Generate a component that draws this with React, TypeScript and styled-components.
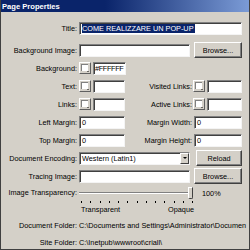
import styled, { createGlobalStyle } from 'styled-components';

const GlobalStyle = createGlobalStyle`
  html, body { margin: 0; padding: 0; background: #d4d0c8; }
`;

const Dialog = styled.div`
  width: 250px;
  height: 250px;
  box-sizing: border-box;
  border: 1px solid #404040;
  border-top: none;
  background: #d4d0c8;
  display: flex;
  flex-direction: column;
  overflow: hidden;
  font-family: "Liberation Sans", Arial, sans-serif;
  font-size: 7.3px;
  color: #000;
`;

const TitleBar = styled.div`
  height: 12px;
  flex: none;
  display: flex;
  align-items: center;
  padding-left: 1px;
  background: linear-gradient(to right, #0a246a 0%, #0a246a 42%, #7b9bd6 100%);
  color: #fff;
  font-weight: bold;
  font-size: 7.6px;
  white-space: nowrap;
`;

const Body = styled.div`
  display: flex;
  flex-direction: column;
  padding-top: 9px;
`;

const Row = styled.div<{ $h: number; $mt?: number }>`
  display: flex;
  align-items: center;
  height: ${p => p.$h}px;
  margin-top: ${p => p.$mt ?? 0}px;
  flex: none;
`;

const Label = styled.span<{ $w: number; $gap?: number }>`
  width: ${p => p.$w}px;
  margin-right: ${p => p.$gap ?? 2}px;
  flex: none;
  text-align: right;
  white-space: nowrap;
`;

const Field = styled.div<{ $w: number; $tight?: boolean }>`
  width: ${p => p.$w}px;
  height: 13px;
  box-sizing: border-box;
  flex: none;
  background: #fff;
  border: 1px solid;
  border-color: #808080 #f4f4f4 #f4f4f4 #808080;
  box-shadow: inset 1px 1px 0 #404040;
  display: flex;
  align-items: center;
  padding-left: ${p => (p.$tight ? 1 : 2)}px;
  letter-spacing: ${p => (p.$tight ? '-0.35px' : 'normal')};
  white-space: nowrap;
  overflow: hidden;
`;

const Selection = styled.span`
  background: #0a246a;
  color: #fff;
  line-height: 9px;
  padding-right: 1px;
`;

const Button = styled.div<{ $w: number; $ml?: number }>`
  width: ${p => p.$w}px;
  height: 16px;
  margin-left: ${p => p.$ml ?? 4}px;
  box-sizing: border-box;
  flex: none;
  background: #d4d0c8;
  border: 1px solid;
  border-color: #fff #404040 #404040 #fff;
  box-shadow: inset -1px -1px 0 #808080;
  display: flex;
  align-items: center;
  justify-content: center;
`;

const Swatch = styled.div`
  width: 12px;
  height: 12px;
  margin-right: 2px;
  box-sizing: border-box;
  flex: none;
  position: relative;
  background: #d4d0c8;
  border: 1px solid;
  border-color: #fff #606060 #606060 #fff;
  &::before {
    content: '';
    position: absolute;
    left: 1px;
    top: 1px;
    width: 6px;
    height: 6px;
    background: #fff;
    border: 1px solid #808080;
    border-width: 1px 0 0 1px;
  }
  &::after {
    content: '';
    position: absolute;
    right: 1px;
    bottom: 1px;
    border-left: 1.5px solid transparent;
    border-right: 1.5px solid transparent;
    border-top: 1.5px solid #000;
  }
`;

const Select = styled(Field)`
  justify-content: space-between;
  padding-right: 0;
`;

const DropArrow = styled.div`
  width: 9px;
  height: 11px;
  box-sizing: border-box;
  background: #d4d0c8;
  border: 1px solid;
  border-color: #fff #404040 #404040 #fff;
  display: flex;
  align-items: center;
  justify-content: center;
  &::after {
    content: '';
    border-left: 2px solid transparent;
    border-right: 2px solid transparent;
    border-top: 2px solid #000;
  }
`;

const SliderBlock = styled.div`
  display: flex;
  align-items: flex-start;
  height: 30px;
  flex: none;
`;

const SliderLabel = styled(Label)`
  line-height: 16px;
`;

const SliderColumn = styled.div`
  display: flex;
  flex-direction: column;
`;

const TrackRow = styled.div`
  display: flex;
  align-items: center;
  height: 16px;
`;

const Track = styled.div`
  width: 114px;
  height: 2px;
  position: relative;
  border-top: 1px solid #808080;
  border-bottom: 1px solid #fff;
  box-sizing: border-box;
`;

const Thumb = styled.div`
  position: absolute;
  right: 0;
  top: -6px;
  width: 3px;
  height: 10px;
  background: #d4d0c8;
  border: 1px solid;
  border-color: #fff #404040 #404040 #fff;
  border-radius: 0 0 2px 2px;
`;

const Percent = styled.span`
  margin-left: 9px;
`;

const Ticks = styled.div`
  width: 112px;
  margin-left: 2px;
  height: 4px;
  display: flex;
  justify-content: space-between;
  align-items: flex-start;
`;

const Tick = styled.span`
  width: 1px;
  height: 2px;
  background: #000;
`;

const Ends = styled.div`
  width: 113px;
  padding-left: 2px;
  display: flex;
  justify-content: space-between;
  line-height: 9px;
`;

const Value = styled.span`
  white-space: nowrap;
`;

const ticks = Array.from({ length: 13 });

export default function App() {
  return (
    <>
      <GlobalStyle />
      <Dialog>
        <TitleBar>Page Properties</TitleBar>
        <Body>
          <Row $h={14}>
            <Label $w={76}>Title:</Label>
            <Field $w={163}>
              <Selection>COME REALIZZARE UN POP-UP</Selection>
            </Field>
          </Row>
          <Row $h={18} $mt={6}>
            <Label $w={76}>Background Image:</Label>
            <Field $w={111} />
            <Button $w={48}>Browse...</Button>
          </Row>
          <Row $h={18}>
            <Label $w={76}>Background:</Label>
            <Swatch />
            <Field $w={33} $tight>#FFFFFF</Field>
          </Row>
          <Row $h={18}>
            <Label $w={76}>Text:</Label>
            <Swatch />
            <Field $w={32} />
            <Label $w={67} $gap={1}>Visited Links:</Label>
            <Swatch />
            <Field $w={35} />
          </Row>
          <Row $h={18}>
            <Label $w={76}>Links:</Label>
            <Swatch />
            <Field $w={32} />
            <Label $w={67} $gap={1}>Active Links:</Label>
            <Swatch />
            <Field $w={35} />
          </Row>
          <Row $h={18}>
            <Label $w={76}>Left Margin:</Label>
            <Field $w={46}>0</Field>
            <Label $w={67}>Margin Width:</Label>
            <Field $w={48}>0</Field>
          </Row>
          <Row $h={18}>
            <Label $w={76}>Top Margin:</Label>
            <Field $w={46}>0</Field>
            <Label $w={67}>Margin Height:</Label>
            <Field $w={48}>0</Field>
          </Row>
          <Row $h={18}>
            <Label $w={76}>Document Encoding:</Label>
            <Select $w={111}>
              Western (Latin1)
              <DropArrow />
            </Select>
            <Button $w={46} $ml={6}>Reload</Button>
          </Row>
          <Row $h={18}>
            <Label $w={76}>Tracing Image:</Label>
            <Field $w={111} />
            <Button $w={48}>Browse...</Button>
          </Row>
          <SliderBlock>
            <SliderLabel $w={76}>Image Transparency:</SliderLabel>
            <SliderColumn>
              <TrackRow>
                <Track>
                  <Thumb />
                </Track>
                <Percent>100%</Percent>
              </TrackRow>
              <Ticks>
                {ticks.map((_, i) => (
                  <Tick key={i} />
                ))}
              </Ticks>
              <Ends>
                <span>Transparent</span>
                <span>Opaque</span>
              </Ends>
            </SliderColumn>
          </SliderBlock>
          <Row $h={17} $mt={2}>
            <Label $w={76}>Document Folder:</Label>
            <Value>{'C:\\Documents and Settings\\Administrator\\Documen'}</Value>
          </Row>
          <Row $h={16}>
            <Label $w={76}>Site Folder:</Label>
            <Value>{'C:\\Inetpub\\wwwroot\\criall\\'}</Value>
          </Row>
        </Body>
      </Dialog>
    </>
  );
}
